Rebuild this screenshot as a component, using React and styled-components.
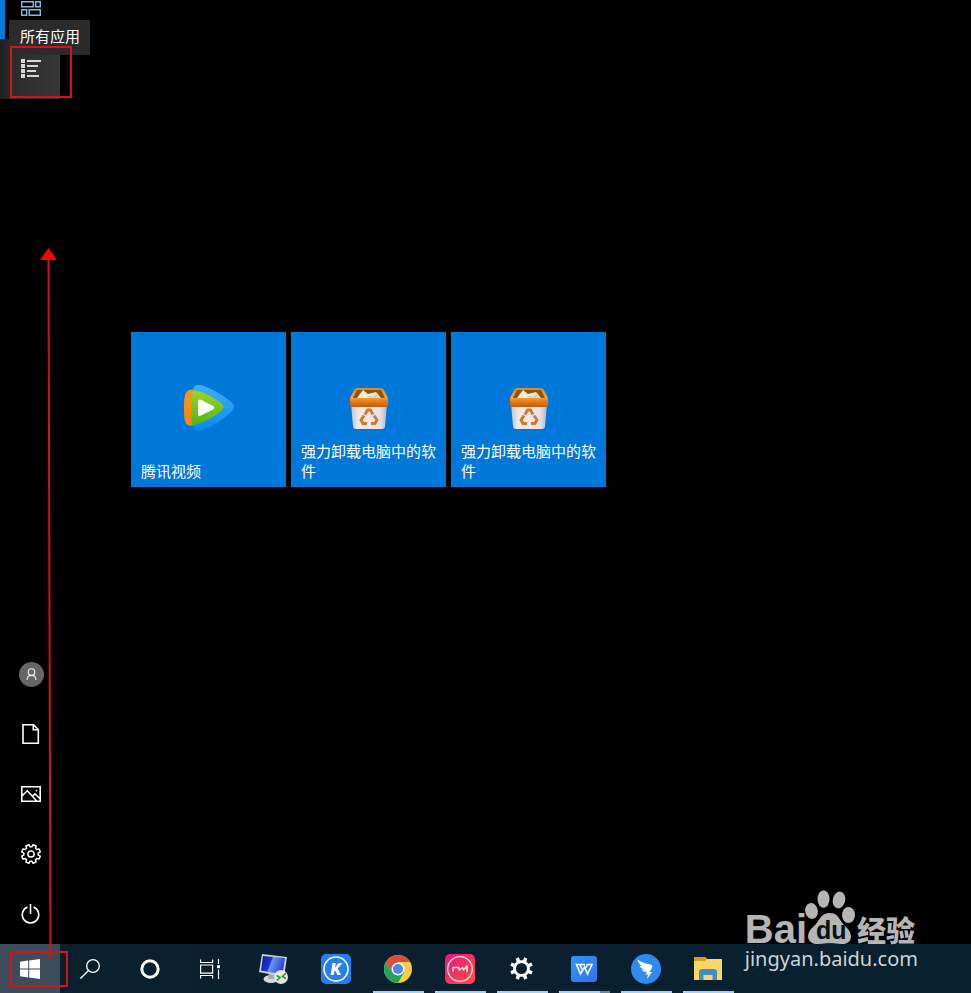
import React from 'react';
import styled, { createGlobalStyle } from 'styled-components';

const GlobalStyle = createGlobalStyle`
  * { box-sizing: border-box; }
  body {
    margin: 0;
    background: #000;
    color: #fff;
    font-family: "Noto Sans", "Noto Sans CJK SC", sans-serif;
  }
  svg { display: block; flex: none; }
`;

const Desktop = styled.div`
  position: relative;
  display: flex;
  flex-direction: column;
  min-height: 100vh;
  overflow: hidden;
`;

const StartMenu = styled.main`
  display: flex;
  flex: 1;
`;

const Rail = styled.nav`
  display: flex;
  flex-direction: column;
  justify-content: space-between;
  width: 60px;
  flex: none;
`;

const RailGroup = styled.div`
  position: relative;
  display: flex;
  flex-direction: column;
`;

const RailButton = styled.button`
  position: relative;
  display: flex;
  align-items: center;
  justify-content: center;
  width: 60px;
  height: 60px;
  padding: 0 0 0 2px;
  border: 0;
  color: #fff;
  background: transparent;
`;

const PinnedButton = styled(RailButton)`
  height: 39px;
  padding-top: 1px;
  align-items: flex-start;
  border-left: 5px solid #0078d7;
  padding-left: 0;
  padding-right: 3px;
`;

const AllAppsButton = styled(RailButton)`
  background: linear-gradient(90deg, #202020 0, #2b2b2b 12px, #373737 100%);
`;

const Tooltip = styled.div`
  position: absolute;
  z-index: 1;
  left: 9px;
  top: 20px;
  padding: 6px 10px 9px 11px;
  background: #2b2b2b;
  font-size: 15px;
  line-height: 20px;
  white-space: nowrap;
`;

const Highlight = styled.span`
  position: absolute;
  z-index: 2;
  left: 10px;
  top: 7px;
  width: ${(p) => p.$width}px;
  height: ${(p) => p.$height}px;
  border: 2px solid #d5121a;
  pointer-events: none;
`;

const TileGrid = styled.section`
  display: flex;
  flex-wrap: wrap;
  align-content: flex-start;
  gap: 5px;
  flex: 1;
  padding: 332px 20px 0 71px;
`;

const Tile = styled.button`
  display: grid;
  width: 155px;
  height: 155px;
  padding: 0;
  border: 0;
  background: #0078d9;
  color: #fff;
  font-family: inherit;
  text-align: left;

  & > * { grid-area: 1 / 1; }
  & > svg { place-self: center; }
`;

const TileLabel = styled.span`
  align-self: end;
  padding: 0 8px 6px 10px;
  font-size: 15px;
  line-height: 20px;
`;

const Taskbar = styled.footer`
  display: flex;
  height: 49px;
  flex: none;
  background: linear-gradient(90deg, #0b1f2d, #0a2030 60%, #09202f);
`;

const SystemButton = styled.button`
  position: relative;
  display: flex;
  align-items: center;
  justify-content: center;
  width: 60px;
  padding: 0;
  border: 0;
  color: #fff;
  background: ${(p) => (p.$active ? '#3c4d59' : 'transparent')};
`;

const AppList = styled.div`
  display: flex;
  padding-left: 3px;
`;

const AppButton = styled.button`
  position: relative;
  display: flex;
  align-items: center;
  justify-content: center;
  width: 62px;
  padding: 0;
  border: 0;
  background: transparent;

  &::after {
    content: "";
    position: absolute;
    left: 6px;
    bottom: 0;
    width: 51px;
    height: 2px;
    background: ${(p) => (p.$grouped ? 'linear-gradient(90deg, #a4d0f3 41px, #6787a0 41px)' : '#a4d0f3')};
    opacity: ${(p) => (p.$running ? 1 : 0)};
  }
`;

const Arrow = styled.svg`
  position: absolute;
  left: 40px;
  bottom: 33px;
  pointer-events: none;
`;

const Watermark = styled.div`
  position: absolute;
  right: 53px;
  bottom: 20px;
  color: #b5b5b5;
  pointer-events: none;
`;

const Brand = styled.div`
  display: flex;
  align-items: flex-end;
  height: 56px;
`;

const BrandLatin = styled.span`
  margin-right: -2px;
  font: bold 40px/32px "Liberation Sans", sans-serif;
`;

const BrandHan = styled.span`
  margin-bottom: 2px;
  font: 900 29px/28px "Noto Sans CJK SC", sans-serif;
`;

const BrandUrl = styled.div`
  color: #cbd5dc;
  font: 20px/28px "Noto Sans", sans-serif;
`;

const PinnedIcon = () => (
  <svg width="20" height="15" viewBox="0 0 20 15" fill="none" stroke="#83b8e6" strokeWidth="1.4">
    <path d="M.7.7h11.6v5H.7zM14.7.7h4.6v5h-4.6zM.7 8.7h5v5.6h-5zM8.2 8.7h11.1v5.6H8.2z" />
  </svg>
);

const ListIcon = () => (
  <svg width="20" height="20" viewBox="0 0 20 20" fill="#d5d8d8">
    <path d="M0 0h4v4H0zM0 5h4v4H0zM0 10h4v4H0zM0 15h4v4H0zM6 1h14v2H6zM6 6h11v2H6zM6 11h9v2H6zM6 16h12v2H6z" />
  </svg>
);

const UserIcon = () => (
  <svg width="26" height="26" viewBox="0 0 26 26" fill="none" stroke="#eee" strokeWidth="1.1">
    <circle cx="13.5" cy="13.5" r="12.5" fill="#666" stroke="none" />
    <circle cx="13.5" cy="11" r="3.3" />
    <path d="M9 19c.2-6.200 8.800-6.200 9 0" />
  </svg>
);

const DocumentIcon = () => (
  <svg width="18" height="20" viewBox="0 0 18 20" fill="none" stroke="currentColor" strokeWidth="1.6">
    <path d="M1 .8h10.500L16.300 5.500v13.700H1zM11.300.8v4.900h5" />
  </svg>
);

const PictureIcon = () => (
  <svg width="20" height="16" viewBox="0 0 20 16" fill="none" stroke="currentColor" strokeWidth="1.6">
    <path d="M.8.8h18.4v14.4H.8zM1 10l5.3-5.2 9.2 10M11.2 10.3 14 7.8l5.2 5.2" />
    <circle cx="15.5" cy="4.6" r=".9" fill="currentColor" stroke="none" />
  </svg>
);

function gearPath(c, outer, inner, spread, slope = 0.1) {
  const pts = [];
  for (let i = 0; i < 8; i += 1) {
    const a = (i * Math.PI) / 4 + Math.PI / 8;
    [[-spread - slope, inner], [-spread, outer], [spread, outer], [spread + slope, inner]].forEach(([d, r]) => {
      pts.push(`${(c + r * Math.cos(a + d)).toFixed(2)} ${(c + r * Math.sin(a + d)).toFixed(2)}`);
    });
  }
  return `M${pts.join('L')}Z`;
}

const GearIcon = () => (
  <svg width="20" height="20" viewBox="0 0 20 20" fill="none" stroke="currentColor" strokeWidth="1.5" strokeLinejoin="round">
    <path d={gearPath(10, 9.5, 7.2, 0.17)} />
    <circle cx="10" cy="10" r="3.1" />
  </svg>
);

const PowerIcon = () => (
  <svg width="20" height="20" viewBox="0 0 20 20" fill="none" stroke="currentColor" strokeWidth="1.6">
    <path d="M6.500 3.100a8.200 8.200 0 1 0 6 0M9.500 0v10" />
  </svg>
);

const WindowsIcon = () => (
  <svg width="20" height="20" viewBox="0 0 20 20" fill="#fff">
    <path d="M0 2.7 8.2 1.6v7.9H0zM9.2 1.4 20 0v9.5H9.2zM0 10.5h8.2v7.9L0 17.2zM9.2 10.5H20V20L9.2 18.5z" />
  </svg>
);

const SearchIcon = () => (
  <svg width="20" height="20" viewBox="0 0 20 20" fill="none" stroke="currentColor" strokeWidth="1.3">
    <circle cx="13" cy="7" r="6.3" />
    <path d="M8.5 11.5.4 19.6" />
  </svg>
);

const CortanaIcon = () => (
  <svg width="20" height="20" viewBox="0 0 20 20" fill="none" stroke="currentColor" strokeWidth="3">
    <circle cx="10" cy="10" r="8.2" />
  </svg>
);

const TaskViewIcon = () => (
  <svg width="20" height="20" viewBox="0 0 20 20" fill="none" stroke="currentColor" strokeWidth="1.2">
    <path d="M.6.5v3h12v-3M.6 19.5v-3h12v3M.6 6h12v8.2H.6zM18.5 0v5M18.5 10.5V20" />
    <path d="M17 6.2h3v3h-3z" fill="currentColor" stroke="none" />
  </svg>
);

const VideoIcon = () => (
  <svg width="50" height="50" viewBox="0 0 50 50">
    <defs>
      <linearGradient id="videoBlue" x2="0" y2="1">
        <stop stopColor="#46adf4" /><stop offset="1" stopColor="#0589fb" />
      </linearGradient>
      <linearGradient id="videoGreen" x2="0" y2="1">
        <stop stopColor="#9bd52c" /><stop offset="1" stopColor="#50b516" />
      </linearGradient>
      <linearGradient id="videoOrange" x2="0" y2="1">
        <stop stopColor="#ee9b25" /><stop offset="1" stopColor="#ff8300" />
      </linearGradient>
    </defs>
    <path d="M9 5Q10-1 17 0 32 5 46 16q8 6 0 12Q33 40 17 45.500 10 47 9 40 7 22 9 5Z" fill="url(#videoBlue)" />
    <path d="M9 4.500C2 4.500 0 8 0 22.500s1 19 9 18Z" fill="url(#videoOrange)" />
    <path d="M9 5q14 2 28 13 5 4 0 8Q24 37 8 40.500 6 23 9 5Z" fill="url(#videoGreen)" />
    <path d="M14 17q0-3.500 3.500-2L29 21q2.500 1.500 0 3.500l-12 6q-3 1.500-3-2Z" fill="#fff" />
  </svg>
);

const BinIcon = () => (
  <svg width="40" height="44" viewBox="0 0 40 44">
    <defs>
      <linearGradient id="binBody">
        <stop stopColor="#bfc3c9" /><stop offset=".2" stopColor="#eceaea" />
        <stop offset=".8" stopColor="#e5e4e4" /><stop offset="1" stopColor="#b8bac0" />
      </linearGradient>
      <linearGradient id="binRim" x2="0" y2="1">
        <stop stopColor="#d58c28" /><stop offset=".5" stopColor="#f6a235" /><stop offset=".8" stopColor="#d96e14" />
      </linearGradient>
    </defs>
    <path d="M2 16h36l-2 22q0 3-3 3H7q-3 0-3-3Z" fill="url(#binBody)" />
    <path d="M9 0h22q3 0 4 2l4 8v7q0 2-2 2H3q-2 0-2-2v-7l4-8Q6 0 9 0Z" fill="url(#binRim)" />
    <path d="M8 2h24l4 8H4Z" fill="#8d5512" />
    <path d="m8 10 6-8 5 4 4-1 4-1 5 6Z" fill="#f7ead2" />
    <path d="m18 8 6 0 4-3 3 5H18Z" fill="#dfd4bd" />
    <path d="M2 18h36" stroke="#bd5d11" strokeWidth="1.500" />
    <g fill="none" stroke="#d4762e" strokeWidth="2.800">
      <path d="m16 26.500 2.500-4.500h3l2.500 4.500M25 27.500l3 4.500-2 3.500h-4M18 35.500h-4l-2-3.500 3-4.500" />
    </g>
  </svg>
);

const RemoteIcon = () => (
  <svg width="32" height="32" viewBox="0 0 32 32">
    <defs>
      <linearGradient id="screen" x2="1" y2=".3">
        <stop stopColor="#10159b" /><stop offset=".45" stopColor="#1e36cf" />
        <stop offset=".5" stopColor="#6d94ef" /><stop offset="1" stopColor="#2547d5" />
      </linearGradient>
    </defs>
    <ellipse cx="13" cy="26" rx="7.500" ry="4" fill="#d7dadd" />
    <path d="m11 20 8 1-1 5h-8z" fill="#a6adb5" />
    <path d="m4 1 25 3-3 20-25-5z" fill="#c9d2d9" />
    <path d="m5 3 22 2-2.500 16.500L3 17.500z" fill="url(#screen)" />
    <circle cx="23" cy="24" r="7" fill="#e2e5e2" />
    <path d="m18.500 22.500 3.500 2-3 3M28 20l-3.500 3.500 3.500 2" fill="none" stroke="#289b40" strokeWidth="1.600" />
  </svg>
);

const KIcon = () => (
  <svg width="30" height="30" viewBox="0 0 30 30">
    <rect width="30" height="30" rx="5" fill="#2580ee" />
    <circle cx="15" cy="15" r="12" fill="none" stroke="#fff" strokeWidth="1.500" />
    <path d="M11.500 9h3.200l-.7 4.500 3.800-4.500h3.700l-4.800 5.500 3.300 6.500h-3.500l-2.300-4.500-.8.900-.5 3.600H9.700z" fill="#fff" />
  </svg>
);

const ChromeIcon = () => (
  <svg width="28" height="28" viewBox="0 0 28 28">
    <circle cx="14" cy="14" r="14" fill="#fccc45" />
    <path d="M14 7h12.100A14 14 0 0 0 1.900 7L8 17.500 14 14Z" fill="#dc4b3e" />
    <path d="M1.900 7A14 14 0 0 0 14 28l6-10.500L14 14l-6 3.500Z" fill="#24a35a" />
    <circle cx="14" cy="14" r="6.500" fill="#f5f5f5" />
    <circle cx="14" cy="14" r="5" fill="#4b86ed" />
  </svg>
);

const MIcon = () => (
  <svg width="30" height="30" viewBox="0 0 30 30">
    <defs>
      <linearGradient id="pink" x2="1" y2="1">
        <stop stopColor="#ec147e" /><stop offset="1" stopColor="#ff503f" />
      </linearGradient>
    </defs>
    <rect width="30" height="30" rx="5" fill="url(#pink)" />
    <g fill="none" stroke="#ffe7eb" strokeWidth="1.300" strokeLinejoin="round">
      <circle cx="15" cy="15" r="12.300" />
      <path d="M8 17.500v-4h5.500l1 2.500 3-2.500 1 2.500 3.500-4v5.500" strokeWidth="1.600" />
    </g>
  </svg>
);

const SettingsIcon = () => (
  <svg width="24" height="24" viewBox="0 0 24 24" fill="#fff" fillRule="evenodd">
    <path d={`${gearPath(11.5, 11.5, 8.5, 0.15, 0.06)}M11.500 6a5.500 5.500 0 1 0 0 11 5.500 5.500 0 0 0 0-11`} />
  </svg>
);

const WpsIcon = () => (
  <svg width="26" height="26" viewBox="0 0 26 26">
    <defs>
      <linearGradient id="wps" x2="1" y2="1">
        <stop stopColor="#299af3" /><stop offset="1" stopColor="#356ff0" />
      </linearGradient>
    </defs>
    <rect width="26" height="26" rx="3" fill="url(#wps)" />
    <path d="M14 8.500H5.500L9.500 18l4-7 3 7 4.500-9.500h-4.500l-1.500 3M9 9l2 4.500" fill="none" stroke="#fff" strokeWidth="1.600" />
  </svg>
);

const WingIcon = () => (
  <svg width="30" height="30" viewBox="0 0 30 30">
    <circle cx="15" cy="15" r="15" fill="#318bee" />
    <path d="M6.500 5.500q5 3.500 13 5 2.500 1 1.500 3L18.500 18h2.500l-5 7 1-4.500h-2.500L16 18q-4 0-5.500-2.500l3.500.2Q9.500 14.500 8.500 11.500l4 1Q7 10 6.500 5.500Z" fill="#fff" />
  </svg>
);

const FolderIcon = () => (
  <svg width="28" height="24" viewBox="0 0 28 24">
    <path d="M0 1q0-1 1-1h10l2 2h15v21H0z" fill="#fbd568" />
    <path d="M0 1q0-1 1-1h10l2 2-2 2H0z" fill="#d99c17" />
    <path d="M5 23v-8q0-3 3-3h12q3 0 3 3v8h-4.500v-5h-9v5z" fill="#438ebd" />
  </svg>
);

const PawIcon = () => (
  <svg width="52" height="56" viewBox="0 0 52 56" fill="#b5b5b5">
    <ellipse cx="6.500" cy="22" rx="6.300" ry="8" transform="rotate(-12 6.500 22)" />
    <ellipse cx="18.500" cy="10" rx="6" ry="8.700" />
    <ellipse cx="34" cy="11" rx="6.200" ry="8.500" transform="rotate(12 34 11)" />
    <ellipse cx="43.500" cy="26" rx="6.500" ry="8" />
    <path d="M25 24c9 0 9 8 16 14 9 8 5 18-5 17-8-1-14-1-22 0-11 1-15-9-6-17 7-6 7-14 17-14Z" />
    <text x="11" y="50" fill="#090f13" fontFamily="Liberation Sans" fontSize="25" fontWeight="bold">du</text>
  </svg>
);

const railItems = [
  ['用户', UserIcon],
  ['文档', DocumentIcon],
  ['图片', PictureIcon],
  ['设置', GearIcon],
  ['电源', PowerIcon],
];

const tiles = [
  { id: 'video', label: '腾讯视频', Icon: VideoIcon },
  { id: 'bin-one', label: '强力卸载电脑中的软件', Icon: BinIcon },
  { id: 'bin-two', label: '强力卸载电脑中的软件', Icon: BinIcon },
];

const apps = [
  { label: '远程桌面', Icon: RemoteIcon },
  { label: 'K', Icon: KIcon },
  { label: 'Chrome', Icon: ChromeIcon, running: true },
  { label: 'M', Icon: MIcon, running: true },
  { label: '设置', Icon: SettingsIcon, running: true },
  { label: 'WPS', Icon: WpsIcon, running: true, grouped: true },
  { label: '钉钉', Icon: WingIcon, running: true },
  { label: '文件资源管理器', Icon: FolderIcon, running: true },
];

export default function App() {
  return (
    <Desktop>
      <GlobalStyle />
      <StartMenu>
        <Rail>
          <RailGroup>
            <PinnedButton aria-label="已固定的磁贴"><PinnedIcon /></PinnedButton>
            <AllAppsButton aria-labelledby="all-apps-tip">
              <ListIcon />
              <Highlight $width={62} $height={52} />
            </AllAppsButton>
            <Tooltip id="all-apps-tip" role="tooltip">所有应用</Tooltip>
          </RailGroup>
          <RailGroup>
            {railItems.map(([label, Icon]) => (
              <RailButton key={label} aria-label={label}><Icon /></RailButton>
            ))}
          </RailGroup>
        </Rail>
        <TileGrid>
          {tiles.map(({ id, label, Icon }) => (
            <Tile key={id}>
              <Icon />
              <TileLabel>{label}</TileLabel>
            </Tile>
          ))}
        </TileGrid>
      </StartMenu>
      <Taskbar>
        <SystemButton $active aria-label="开始">
          <WindowsIcon />
          <Highlight $width={58} $height={36} />
        </SystemButton>
        <SystemButton aria-label="搜索"><SearchIcon /></SystemButton>
        <SystemButton aria-label="Cortana"><CortanaIcon /></SystemButton>
        <SystemButton aria-label="任务视图"><TaskViewIcon /></SystemButton>
        <AppList>
          {apps.map(({ label, Icon, running, grouped }) => (
            <AppButton key={label} aria-label={label} $running={running} $grouped={grouped}>
              <Icon />
            </AppButton>
          ))}
        </AppList>
      </Taskbar>
      <Arrow width="18" height="712" viewBox="0 0 18 712">
        <path d="M8.500 10 10.500 711" stroke="#d5121a" strokeWidth="2" />
        <path d="M8.500 0 17 12H0Z" fill="#f00" />
      </Arrow>
      <Watermark>
        <Brand>
          <BrandLatin>Bai</BrandLatin>
          <PawIcon />
          <BrandHan>经验</BrandHan>
        </Brand>
        <BrandUrl>jingyan.baidu.com</BrandUrl>
      </Watermark>
    </Desktop>
  );
}
